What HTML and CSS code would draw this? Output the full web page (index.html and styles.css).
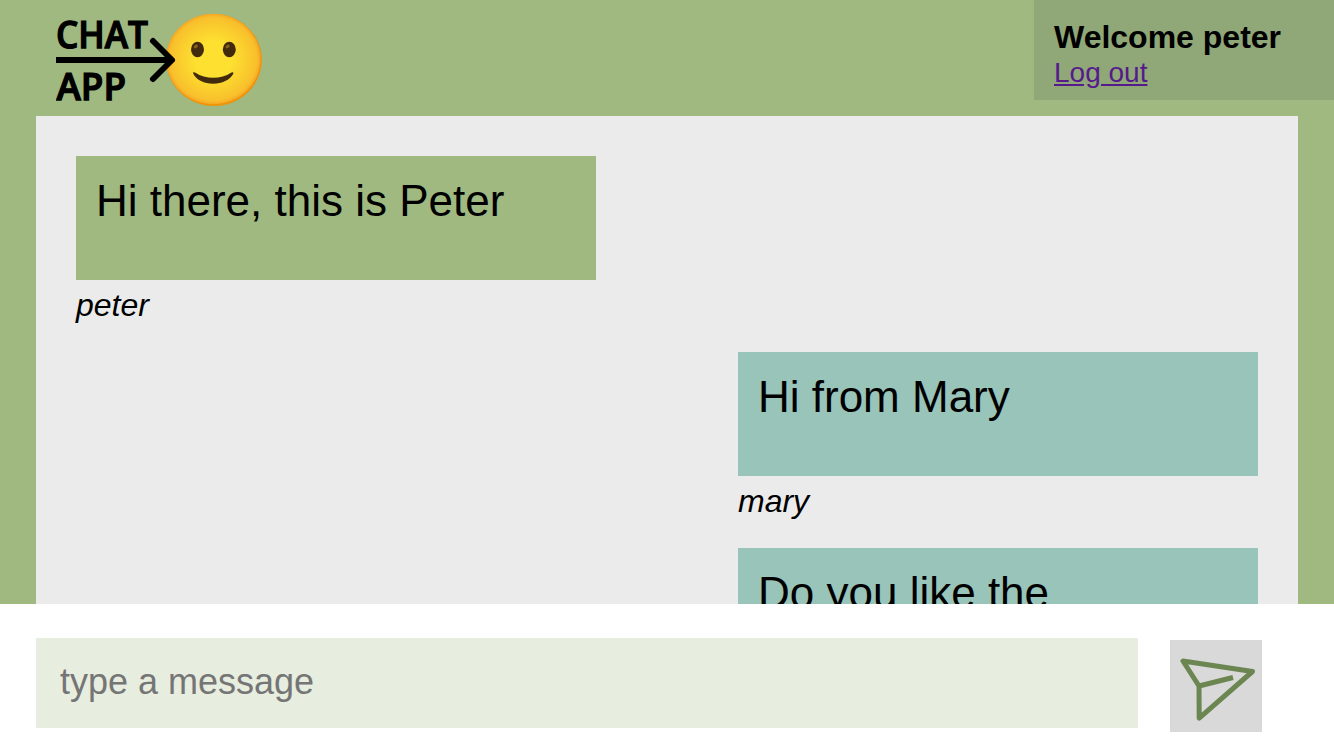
FILE: index.html
```html
<!DOCTYPE html>
<html lang="en">
<head>
<meta charset="utf-8">
<title>Chat App</title>
<link rel="stylesheet" href="styles.css">
</head>
<body>
<div class="app">
  <header class="header">
    <svg class="logo" width="210" height="116" viewBox="56 0 210 116" role="img" aria-label="Chat App">
      <defs>
        <radialGradient id="face" cx="0.5" cy="0.5" r="0.5">
          <stop offset="0.4" stop-color="#fde030"/>
          <stop offset="0.92" stop-color="#f8c02c"/>
          <stop offset="1" stop-color="#f5a723"/>
        </radialGradient>
      </defs>
      <ellipse cx="214" cy="60" rx="47.800" ry="46" fill="#f09307"/>
      <ellipse cx="213.300" cy="59" rx="47.200" ry="45.300" fill="url(#face)"/>
      <ellipse cx="197.500" cy="49.500" rx="6.500" ry="7.700" fill="#422b0d"/>
      <ellipse cx="229.300" cy="49.500" rx="6.500" ry="7.700" fill="#422b0d"/>
      <ellipse cx="195.800" cy="46.500" rx="2.300" ry="1.500" transform="rotate(-35 195.800 46.500)" fill="#896024"/>
      <ellipse cx="227.600" cy="46.500" rx="2.300" ry="1.500" transform="rotate(-35 227.600 46.500)" fill="#896024"/>
      <path d="M193.300 73.700C192.500 72.200 194.200 71.800 195.500 72.800C205 79.500 221.500 79.500 231 72.800C232.300 71.800 233.900 72.300 233.200 73.900C230 79.800 222 83.700 213.300 83.700C204 83.700 196.500 80 193.300 73.700Z" fill="#422b0d"/>
      <path d="M56 60H172" fill="none" stroke="#000" stroke-width="6"/>
      <path d="M153 41L172 60L153 79" fill="none" stroke="#000" stroke-width="6" stroke-linecap="round" stroke-linejoin="round"/>
      <text class="logo-text" x="56" y="47.500" textLength="92" lengthAdjust="spacingAndGlyphs">CHAT</text>
      <text class="logo-text" x="56.500" y="99.500" textLength="69.500" lengthAdjust="spacingAndGlyphs">APP</text>
    </svg>
    <div class="user">
      <div class="welcome">Welcome peter</div>
      <a class="logout" href="#">Log out</a>
    </div>
  </header>
  <main class="messages">
    <div class="message">
      <div class="bubble">Hi there, this is Peter</div>
      <div class="author">peter</div>
    </div>
    <div class="message other">
      <div class="bubble">Hi from Mary</div>
      <div class="author">mary</div>
    </div>
    <div class="message other">
      <div class="bubble">Do you like the</div>
    </div>
  </main>
</div>
<form class="composer">
  <input class="entry" type="text" placeholder="type a message">
  <button class="send" type="button" aria-label="Send">
    <svg width="92" height="92" viewBox="0 0 92 92" fill="none" stroke="#6b8650" stroke-width="5" stroke-linejoin="round">
      <path d="M13 21L82.500 31.500L29.200 78.200L29 46Z"/>
      <path d="M29 46L63 37.500"/>
    </svg>
  </button>
</form>
</body>
</html>
```

FILE: styles.css
```css
* { box-sizing: border-box; }
body {
  margin: 0;
  height: 750px;
  overflow: hidden;
  display: flex;
  flex-direction: column;
  background: #fff;
  color: #000;
  font-family: "Liberation Sans", Arial, sans-serif;
}
.app {
  height: 604px;
  flex: none;
  display: flex;
  flex-direction: column;
  background: #9fb981;
  overflow: hidden;
}
.header {
  height: 116px;
  flex: none;
  display: flex;
  justify-content: space-between;
  align-items: flex-start;
  padding-left: 56px;
}
.logo { display: block; }
.logo-text {
  font: 600 37.5px "Open Sans", "Noto Sans", sans-serif;
  stroke: #000;
  stroke-width: 1.3px;
  text-rendering: geometricPrecision;
}
.user {
  width: 300px;
  height: 100px;
  padding: 19px 20px 0;
  background: #90a777;
}
.welcome { font-size: 32px; font-weight: bold; line-height: 37px; }
.logout { display: block; width: max-content; font-size: 28px; line-height: 34px; color: #551a8b; text-decoration: underline; }
.messages {
  flex: 1;
  min-height: 0;
  margin: 0 36px;
  padding: 40px;
  background: #ebebeb;
  overflow: hidden;
}
.message { width: 520px; height: 196px; }
.other { margin-left: auto; }
.bubble {
  height: 124px;
  padding: 20px;
  background: #9fb981;
  font-size: 44px;
  line-height: 50px;
}
.other .bubble { background: #98c4b9; }
.author { padding-top: 7px; font-size: 32px; font-style: italic; line-height: 36px; }
.composer {
  flex: 1;
  display: flex;
  align-items: flex-start;
  gap: 32px;
  padding: 34px 72px 0 36px;
}
.entry {
  flex: 1;
  min-width: 0;
  height: 90px;
  padding: 0 24px 2px;
  border: 0;
  border-radius: 0;
  background: #e7eddf;
  font: 36px "Liberation Sans", Arial, sans-serif;
}
.entry::placeholder { color: #757575; }
.send { width: 92px; height: 92px; margin-top: 2px; padding: 0; border: 0; background: #d9d9d9; }
.send svg { display: block; }
```
